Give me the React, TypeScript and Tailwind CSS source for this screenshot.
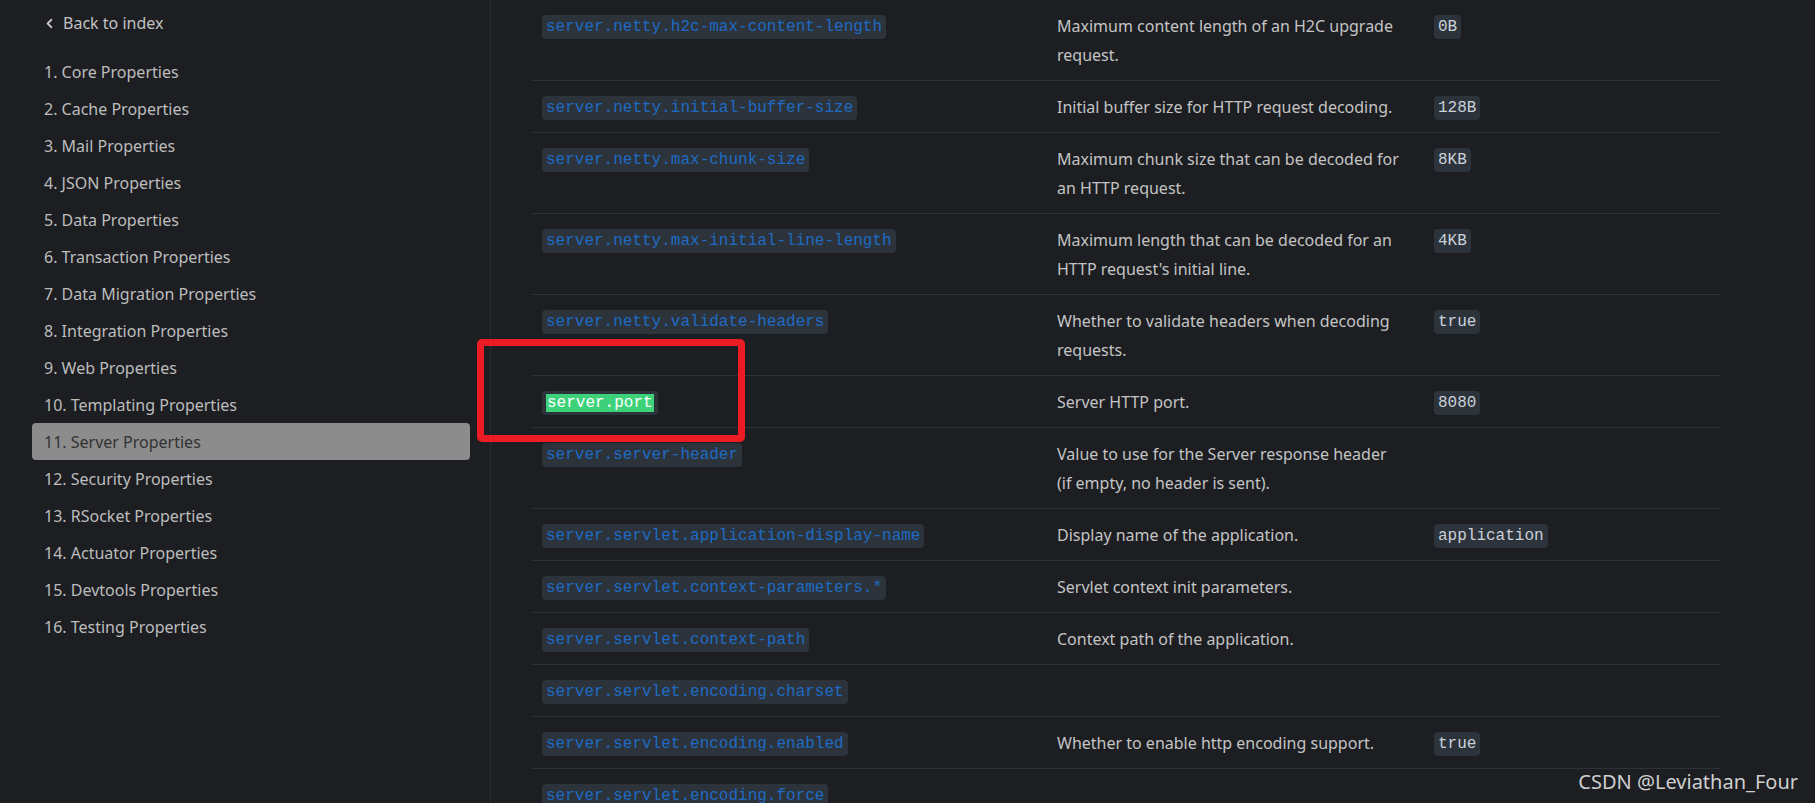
import React from 'react'
import { ChevronLeft } from 'lucide-react'

interface Prop {
  name: string
  desc: string[]
  def?: string
  highlight?: boolean
}

const sections = [
  '1. Core Properties',
  '2. Cache Properties',
  '3. Mail Properties',
  '4. JSON Properties',
  '5. Data Properties',
  '6. Transaction Properties',
  '7. Data Migration Properties',
  '8. Integration Properties',
  '9. Web Properties',
  '10. Templating Properties',
  '11. Server Properties',
  '12. Security Properties',
  '13. RSocket Properties',
  '14. Actuator Properties',
  '15. Devtools Properties',
  '16. Testing Properties',
]

const props: Prop[] = [
  { name: 'server.netty.h2c-max-content-length', desc: ['Maximum content length of an H2C upgrade', 'request.'], def: '0B' },
  { name: 'server.netty.initial-buffer-size', desc: ['Initial buffer size for HTTP request decoding.'], def: '128B' },
  { name: 'server.netty.max-chunk-size', desc: ['Maximum chunk size that can be decoded for', 'an HTTP request.'], def: '8KB' },
  { name: 'server.netty.max-initial-line-length', desc: ['Maximum length that can be decoded for an', "HTTP request's initial line."], def: '4KB' },
  { name: 'server.netty.validate-headers', desc: ['Whether to validate headers when decoding', 'requests.'], def: 'true' },
  { name: 'server.port', desc: ['Server HTTP port.'], def: '8080', highlight: true },
  { name: 'server.server-header', desc: ['Value to use for the Server response header', '(if empty, no header is sent).'] },
  { name: 'server.servlet.application-display-name', desc: ['Display name of the application.'], def: 'application' },
  { name: 'server.servlet.context-parameters.*', desc: ['Servlet context init parameters.'] },
  { name: 'server.servlet.context-path', desc: ['Context path of the application.'] },
  { name: 'server.servlet.encoding.charset', desc: [] },
  { name: 'server.servlet.encoding.enabled', desc: ['Whether to enable http encoding support.'], def: 'true' },
  { name: 'server.servlet.encoding.force', desc: [] },
]

const mono = "font-['Liberation_Mono','DejaVu_Sans_Mono',monospace]"

export default function App() {
  return (
    <div className="relative flex h-[803px] w-full overflow-hidden bg-[#1c1e22] font-['Noto_Sans','Open_Sans',sans-serif]">
      <aside className="flex w-[491px] shrink-0 flex-col border-r border-[#2a2d32] pt-[4px] pl-[32px] pr-[20px]">
        <div className="flex h-[38px] items-center gap-[6px] pl-[12px] text-[16px] text-[#c2c2c2]">
          <ChevronLeft size={15} strokeWidth={3} className="-ml-[2px]" />
          <span>Back to index</span>
        </div>
        <ul className="mt-[11px]">
          {sections.map((s) => (
            <li
              key={s}
              className={`flex h-[37px] items-center rounded-[4px] pl-[12px] text-[16px] ${
                s.startsWith('11.') ? 'bg-[#8c8c8c] text-[#333333]' : 'text-[#bdbdbd]'
              }`}
            >
              {s}
            </li>
          ))}
        </ul>
      </aside>

      <main className="flex-1 pl-[41px]">
        <table className="w-[1189px] table-fixed border-collapse">
          <colgroup>
            <col className="w-[515px]" />
            <col className="w-[377px]" />
            <col className="w-[297px]" />
          </colgroup>
          <tbody>
            {props.map((p) => (
              <tr key={p.name} className="border-b border-[#2e3137] align-top leading-[29px]">
                <td className="px-[10px] pt-[11px] pb-[11px]">
                  <code className={`${mono} inline-block rounded-[4px] bg-[#2d333b] px-[4px] text-[16px] leading-[24px] ${p.highlight ? 'text-white' : 'text-[#1d6bc4]'}`}>
                    {p.highlight ? <span className="bg-[#3dd279] px-[1px]">{p.name}</span> : p.name}
                  </code>
                </td>
                <td className="whitespace-nowrap px-[10px] pt-[12px] pb-[10px] text-[16px] text-[#c4c4c4]">
                  {p.desc.map((l, i) => (
                    <div key={i}>{l}</div>
                  ))}
                </td>
                <td className="px-[10px] pt-[11px] pb-[11px]">
                  {p.def && (
                    <code className={`${mono} inline-block rounded-[4px] bg-[#2d333b] px-[4px] text-[16px] leading-[24px] text-[#c9d1d9]`}>
                      {p.def}
                    </code>
                  )}
                </td>
              </tr>
            ))}
          </tbody>
        </table>
      </main>

      <div className="pointer-events-none absolute left-[477px] top-[339px] h-[103px] w-[268px] rounded-[5px] border-[7px] border-[#ed1c24]" />

      <div className="pointer-events-none absolute right-[17px] top-[768px] font-['Noto_Sans',sans-serif] text-[20px] leading-[28px] text-[#cfcfcf]">
        CSDN @Leviathan_Four
      </div>
    </div>
  )
}
